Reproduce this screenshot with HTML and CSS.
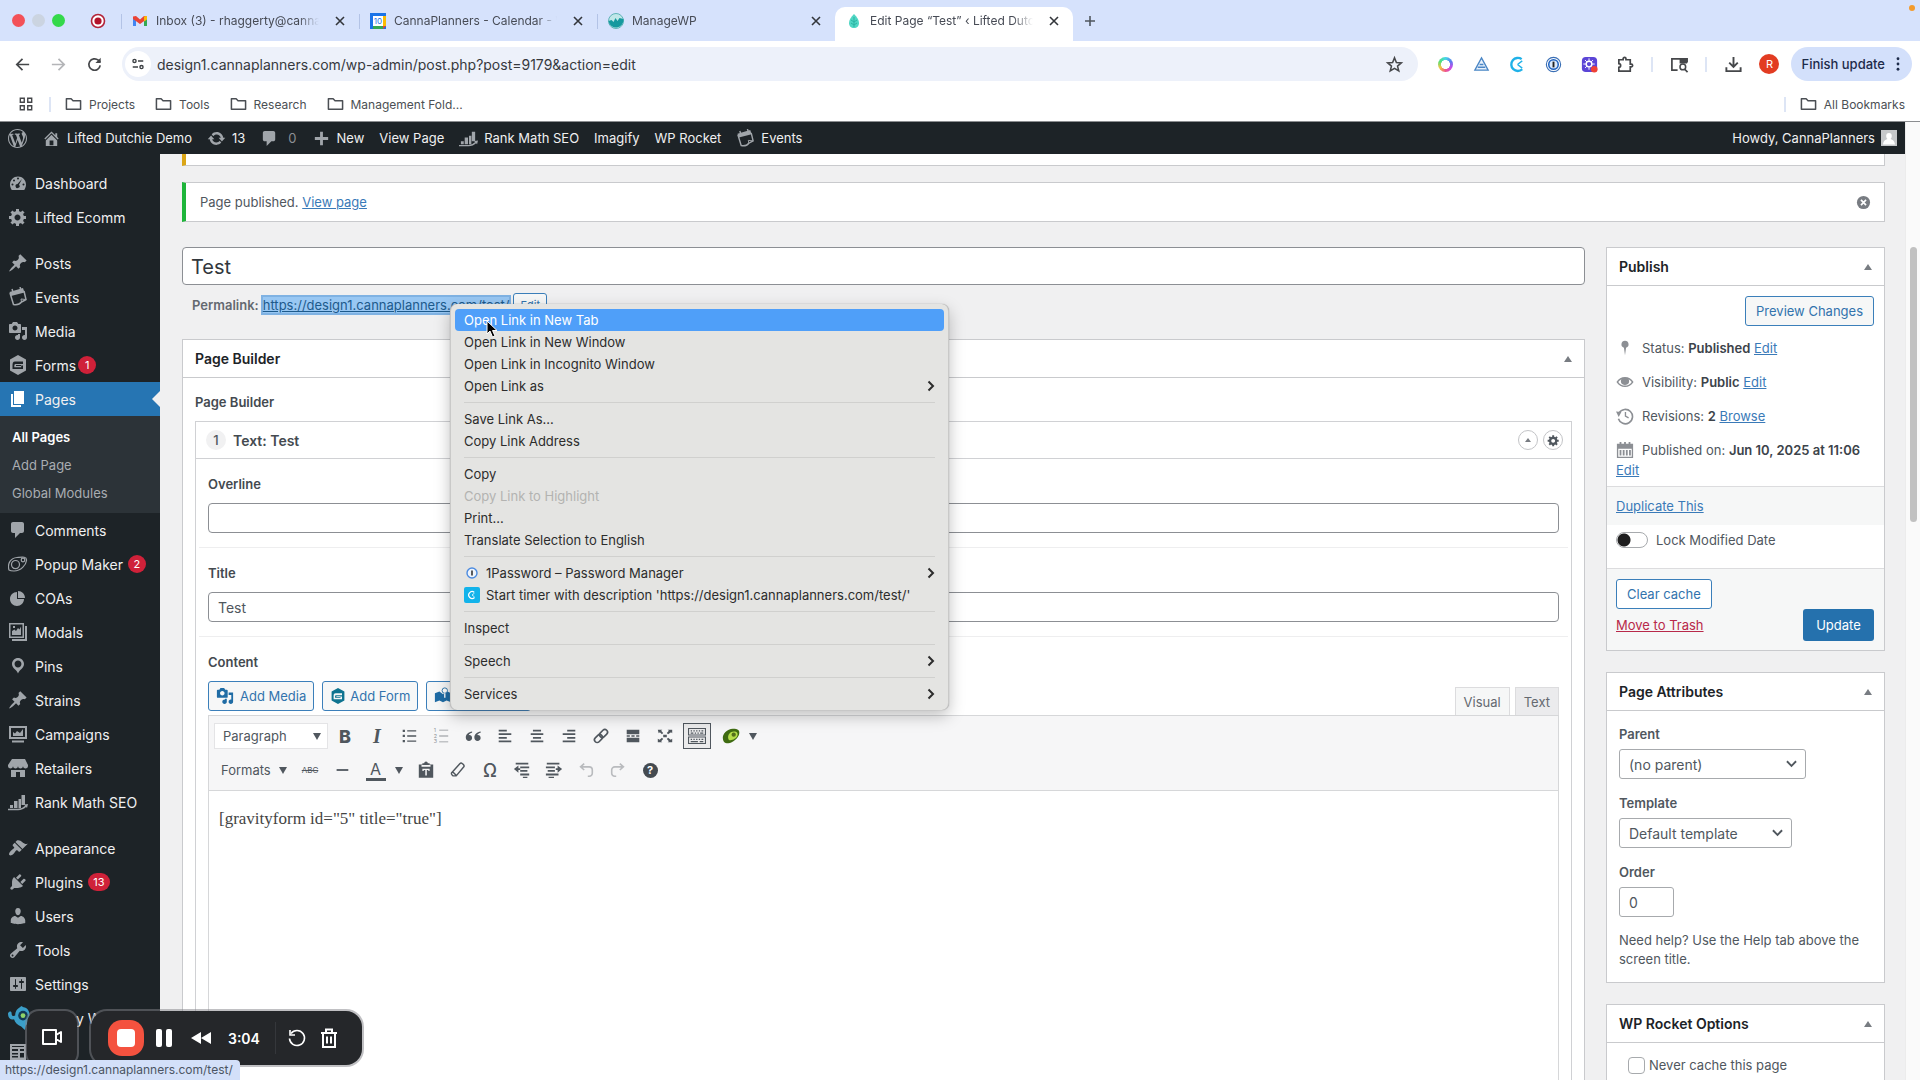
FILE: index.html
```html
<!DOCTYPE html>
<html lang="en">
<head>
  <meta charset="UTF-8" />
  <meta name="viewport" content="width=device-width, initial-scale=1.0"/>
  <title>Edit Page "Test"</title>
  <link rel="stylesheet" href="styles.css">
</head>
<body>
  <!-- icon sprite -->
  <svg class="sprite" aria-hidden="true">
    <symbol id="i-close" viewBox="0 0 16 16"><path d="M4 4l8 8M12 4l-8 8" fill="none" stroke="currentColor" stroke-width="1.6"/></symbol>
    <symbol id="i-folder" viewBox="0 0 18 16"><path d="M1.500 2.500h5l2 2h8v9h-15z" fill="none" stroke="currentColor" stroke-width="1.600" stroke-linejoin="round"/></symbol>
    <symbol id="i-chevron" viewBox="0 0 10 12"><path d="M2.500 1.500L7 6l-4.500 4.500" fill="none" stroke="currentColor" stroke-width="2"/></symbol>
    <symbol id="i-wp" viewBox="0 0 20 20"><path d="M20 10c0-5.510-4.490-10-10-10C4.480 0 0 4.490 0 10c0 5.520 4.480 10 10 10 5.510 0 10-4.480 10-10zM7.780 15.370L4.370 6.220c.55-.02 1.170-.08 1.170-.08.5-.06.44-1.130-.06-1.110 0 0-1.450.11-2.370.11-.18 0-.37 0-.58-.01C4.120 2.690 6.870 1.110 10 1.110c2.330 0 4.450.87 6.050 2.340-.68-.11-1.650.39-1.650 1.580 0 .74.45 1.360.9 2.100.35.61.55 1.360.55 2.460 0 1.490-1.400 5-1.400 5l-3.030-8.370c.54-.02.82-.17.82-.17.5-.05.44-1.250-.06-1.220 0 0-1.440.12-2.380.12-.87 0-2.330-.12-2.330-.12-.5-.03-.56 1.200-.06 1.220l.92.08 1.260 3.410zM17.410 10c.24-.64.74-1.870.43-4.250.7 1.290 1.050 2.710 1.050 4.250 0 3.290-1.730 6.240-4.400 7.780.97-2.590 1.940-5.200 2.920-7.780zM6.100 18.090C3.120 16.650 1.110 13.530 1.110 10c0-1.300.23-2.480.72-3.590C3.250 10.300 4.670 14.200 6.100 18.090zm4.030-6.630l2.580 6.980c-.86.29-1.760.45-2.710.45-.79 0-1.570-.11-2.290-.33.81-2.380 1.620-4.740 2.420-7.100z"/></symbol>
    <symbol id="i-home" viewBox="0 0 20 20"><path d="M16 8.500l1.530 1.530-1.060 1.060L10 4.600l-6.470 6.490-1.060-1.060L10 2.500l4 4v-2h2v4zm-6-2.460l6 5.990V18H4v-5.970zM12 17v-5H8v5h4z"/></symbol>
    <symbol id="i-update" viewBox="0 0 20 20"><path d="M10.200 3.280c3.530 0 6.430 2.610 6.920 6h2.080l-3.500 4-3.500-4h2.320c-.45-1.970-2.210-3.450-4.320-3.450-1.450 0-2.730.71-3.540 1.780L4.950 5.660C6.230 4.200 8.110 3.280 10.200 3.280zm-.4 13.440c-3.520 0-6.430-2.610-6.920-6H.8l3.500-4c1.170 1.330 2.330 2.670 3.500 4H5.480c.45 1.970 2.210 3.450 4.320 3.450 1.450 0 2.730-.71 3.540-1.780l1.710 1.950c-1.280 1.460-3.150 2.380-5.250 2.380z"/></symbol>
    <symbol id="i-comment" viewBox="0 0 20 20"><path d="M5 2h9c1.100 0 2 .9 2 2v7c0 1.100-.9 2-2 2h-2l-5 5v-5H5c-1.100 0-2-.9-2-2V4c0-1.100.9-2 2-2z"/></symbol>
    <symbol id="i-plus" viewBox="0 0 20 20"><path d="M17 8.500v3h-5.500V17h-3v-5.500H3v-3h5.500V3h3v5.500z"/></symbol>
    <symbol id="i-rank" viewBox="0 0 20 20"><path d="M2 13h3v3H2zM6 9h3.500v7H6zM10.500 7H13v9h-2.500zM13.500 3H17v10h-3.500z"/><path d="M0 17.500h10c4 0 5.500-1 8-3.500" fill="none" stroke="currentColor" stroke-width="1.500"/><path d="M16 12.500l4-.5-1 4z"/></symbol>
    <symbol id="i-events" viewBox="0 0 20 20"><path d="M1.500 5L15 1l1.500 4.500L3 9z"/><path d="M2 6l3.500 11.500c3 .5 6.500-.5 8-2.500l4.500-2.500L16 4" fill="none" stroke="currentColor" stroke-width="1.500"/><path d="M13.500 15l-.5-3 5 .5" fill="none" stroke="currentColor"/><path d="M4 2l1 3M12 0l1 3" stroke="currentColor" stroke-width="1.500"/></symbol>
    <symbol id="i-dash" viewBox="0 0 20 20"><path fill-rule="evenodd" d="M3.760 17C2.660 15.400 2 13.400 2 11.500 2 7 5.600 3.500 10 3.500s8 3.500 8 8c0 1.900-.66 3.900-1.760 5.500zM9 5.500a1 1 0 1 0 2 0 1 1 0 1 0-2 0M5 7.500a1 1 0 1 0 2 0 1 1 0 1 0-2 0M3.500 11.500a1 1 0 1 0 2 0 1 1 0 1 0-2 0M14.500 11.500a1 1 0 1 0 2 0 1 1 0 1 0-2 0M14 6l-3 5.700a2 2 0 1 1-1.500-.6z"/></symbol>
    <symbol id="i-gear" viewBox="0 0 20 20"><path d="M18 12h-2.180c-.17.7-.44 1.350-.81 1.930l1.540 1.540-2.100 2.100-1.540-1.540c-.58.36-1.230.63-1.910.79V19H8v-2.180c-.68-.16-1.330-.43-1.910-.79l-1.540 1.540-2.120-2.120 1.540-1.540c-.36-.58-.63-1.230-.79-1.910H1V9.030h2.170c.16-.7.44-1.350.8-1.940L2.430 5.550l2.100-2.100 1.540 1.540c.58-.37 1.240-.64 1.930-.81V2h3v2.180c.68.16 1.330.43 1.910.79l1.540-1.540 2.120 2.120-1.540 1.540c.36.59.64 1.240.8 1.940H18V12zm-8.500 1.500c1.660 0 3-1.340 3-3s-1.340-3-3-3-3 1.340-3 3 1.340 3 3 3z"/></symbol>
    <symbol id="i-pin" viewBox="0 0 20 20"><path d="M10.440 3.020l1.820-1.820 6.360 6.350-1.830 1.820c-1.050-.68-2.480-.57-3.410.36l-.75.75c-.92.93-1.040 2.350-.35 3.410l-1.830 1.820-2.410-2.410-2.800 2.790c-.42.42-3.380 2.710-3.800 2.290s1.860-3.390 2.280-3.810l2.790-2.790L4.100 9.360l1.830-1.820c1.050.69 2.480.57 3.400-.36l.75-.75c.93-.92 1.050-2.350.36-3.410z"/></symbol>
    <symbol id="i-media" viewBox="0 0 20 20"><path d="M13 11V4c0-.55-.45-1-1-1h-1.670L9 1H5L3.670 3H2c-.55 0-1 .45-1 1v7c0 .55.45 1 1 1h10c.55 0 1-.45 1-1zM7 4.500c1.380 0 2.500 1.120 2.500 2.500S8.380 9.500 7 9.500 4.500 8.380 4.500 7 5.620 4.500 7 4.500zM14 6h5v10.500c0 1.380-1.120 2.500-2.500 2.500S14 17.880 14 16.500s1.120-2.500 2.500-2.500c.17 0 .34.02.5.05V9h-3V6zm-4 8.050V13h2v3.500c0 1.380-1.120 2.500-2.500 2.500S7 17.880 7 16.500 8.120 14 9.500 14c.17 0 .34.02.5.05z"/></symbol>
    <symbol id="i-form" viewBox="0 0 20 20"><path fill-rule="evenodd" d="M10 0l8 4.500v11L10 20l-8-4.500v-11zM7 6.500c-2 0-2.500 1.500-2.500 4V14H15v-3.500h-1.800v1.700H6.300c0-2.500.2-3.200 1.200-3.200H15V6.500zM8 10h5v1H8z"/></symbol>
    <symbol id="i-page" viewBox="0 0 20 20"><path d="M6 15V2h10v13H6zm-1 1h8v2H3V5h2v11z"/></symbol>
    <symbol id="i-popup" viewBox="0 0 20 20"><g fill="none" stroke="currentColor" stroke-width="1.200"><path d="M1 16C-1 9 3 4 9 3.500c5-.5 10-1.500 9.500 3S13 17 6 17c-2 0-4-.3-5-1z"/><circle cx="7.500" cy="10.500" r="4"/><circle cx="15" cy="6" r="1.800"/></g><path d="M3.500 12.500c1 3 5 3.500 7 1.500-2 .5-5 .5-7-1.500z"/></symbol>
    <symbol id="i-pie" viewBox="0 0 20 20"><path d="M10 10V3c3.870 0 7 3.130 7 7h-7zM9 4v7h7c0 3.870-3.130 7-7 7s-7-3.130-7-7 3.130-7 7-7z"/></symbol>
    <symbol id="i-modal" viewBox="0 0 20 20"><path fill-rule="evenodd" d="M1 1h15v15H1zM2.500 2.500v12h12v-12zM17 4h2v15H4v-2h13z"/><path d="M4 13V9l2.500-1.500L8 9l2-3 1.500 1.500L13 4.500V13zM5 4h2v2H5z"/></symbol>
    <symbol id="i-location" viewBox="0 0 20 20"><path d="M10 2C6.690 2 4 4.690 4 8c0 2.020 1.170 3.710 2.530 4.890.43.37 1.180.96 1.850 1.830.74.97 1.410 2.010 1.620 2.710.21-.7.88-1.740 1.620-2.710.67-.87 1.420-1.460 1.850-1.830C14.830 11.710 16 10.020 16 8c0-3.310-2.690-6-6-6zm0 2.560c1.900 0 3.440 1.540 3.440 3.440S11.900 11.440 10 11.440 6.560 9.900 6.560 8 8.100 4.560 10 4.560z"/></symbol>
    <symbol id="i-campaign" viewBox="0 0 20 20"><path fill-rule="evenodd" d="M1 2h18v13H1zM3 4v9h14V4zM4 16.500h12v2H4z"/><path d="M5 12V8l2 1.500L9 7l3 2 3-4v7z"/></symbol>
    <symbol id="i-store" viewBox="0 0 20 20"><path d="M1 10c.41.29.96.43 1.500.43.55 0 1.090-.14 1.500-.43.62-.46 1-1.170 1-2 0 .83.37 1.540 1 2 .41.29.96.43 1.500.43.55 0 1.090-.14 1.500-.43.62-.46 1-1.170 1-2 0 .83.37 1.540 1 2 .41.29.96.43 1.510.43.54 0 1.080-.14 1.490-.43.62-.46 1-1.170 1-2 0 .83.37 1.540 1 2 .41.29.96.43 1.500.43.55 0 1.090-.14 1.500-.43.63-.46 1-1.170 1-2V7l-3-6H4L0 7v1c0 .83.37 1.540 1 2zm2 9h5v-5h4v5h5v-7H3z"/></symbol>
    <symbol id="i-brush" viewBox="0 0 20 20"><path d="M14.480 11.060L7.410 3.990l1.500-1.500c.5-.56 2.300-.47 3.510.32 1.210.8 1.430 1.280 2.910 2.100 1.180.64 2.450 1.260 4.450.85zm-.71.71L6.700 4.700 4.930 6.470c-.39.39-.39 1.020 0 1.410l1.060 1.060c.39.39.39 1.030 0 1.420-.6.6-1.430 1.110-2.210 1.690-.35.26-.7.53-1.010.84C1.430 14.230.4 16.080 1.400 17.070c.99 1 2.840-.03 4.180-1.360.31-.31.58-.66.85-1.020.57-.78 1.080-1.610 1.690-2.210.39-.39 1.020-.39 1.410 0l1.060 1.060c.39.39 1.020.39 1.410 0z"/></symbol>
    <symbol id="i-plugin" viewBox="0 0 20 20"><path d="M13.110 4.360L9.870 7.600 8 5.730l3.240-3.240c.35-.34 1.050-.2 1.560.32.52.51.66 1.210.31 1.550zm-8 1.770l.91-1.120 9.010 9.010-1.190.84c-.71.71-2.630 1.160-3.820 1.160H6.140L4.900 17.260c-.59.59-1.540.59-2.120 0-.59-.58-.59-1.530 0-2.120l1.240-1.240v-3.880c0-1.130.4-3.190 1.090-3.890zm7.260 3.970l3.240-3.240c.34-.35 1.040-.21 1.550.31.52.51.66 1.210.31 1.550l-3.240 3.250z"/></symbol>
    <symbol id="i-user" viewBox="0 0 20 20"><path d="M10 9.250c-2.270 0-2.730-3.440-2.730-3.440C7 4.020 7.820 2 9.970 2c2.160 0 2.980 2.020 2.710 3.810 0 0-.41 3.440-2.680 3.440zm0 2.570L12.720 10c2.390 0 4.520 2.330 4.520 4.530v2.490s-3.650 1.130-7.240 1.130c-3.650 0-7.240-1.130-7.240-1.130v-2.490c0-2.250 1.940-4.480 4.470-4.480z"/></symbol>
    <symbol id="i-tools" viewBox="0 0 20 20"><path d="M16.680 9.770c-1.340 1.340-3.300 1.670-4.950.99l-5.410 6.520c-.99.99-2.590.99-3.580 0s-.99-2.590 0-3.570l6.520-5.420c-.68-1.650-.35-3.610.99-4.950 1.280-1.280 3.120-1.620 4.720-1.060l-2.890 2.890 2.820 2.820 2.860-2.870c.53 1.580.18 3.390-1.080 4.650zM3.810 16.210c.4.39 1.040.39 1.430 0 .4-.4.4-1.040 0-1.430-.39-.4-1.030-.4-1.430 0-.39.39-.39 1.030 0 1.430z"/></symbol>
    <symbol id="i-settings" viewBox="0 0 20 20"><path d="M18 16V4c0-.55-.45-1-1-1H3c-.55 0-1 .45-1 1v12c0 .55.45 1 1 1h14c.55 0 1-.45 1-1zM8 11h1c.55 0 1 .45 1 1s-.45 1-1 1H8v1.500c0 .28-.22.5-.5.5s-.5-.22-.5-.5V13H6c-.55 0-1-.45-1-1s.45-1 1-1h1V5.500c0-.28.22-.5.5-.5s.5.22.5.5V11zm5-2h-1c-.55 0-1-.45-1-1s.45-1 1-1h1V5.500c0-.28.22-.5.5-.5s.5.22.5.5V7h1c.55 0 1 .45 1 1s-.45 1-1 1h-1v5.500c0 .28-.22.5-.5.5s-.5-.22-.5-.5V9z"/></symbol>
    <symbol id="i-table" viewBox="0 0 20 20"><path fill-rule="evenodd" d="M2 2h16v17H2zM4 7v2h6V7zM12 7v2h4V7zM4 11v1.500h6V11zM4 14v1.500h6V14zM12 11v4.500h4V11zM4 4v1h12V4z"/></symbol>
    <symbol id="i-ul" viewBox="0 0 20 20"><path d="M3 3h2.500v2.500H3zM3 8.700h2.500v2.500H3zM3 14.500h2.500V17H3zM8 3.500h10V5H8zM8 9.200h10v1.500H8zM8 15h10v1.500H8z"/></symbol>
    <symbol id="i-quote" viewBox="0 0 20 20"><path d="M9 5C5 5.500 2 8 2 11.700 2 14 3.500 15.500 5.500 15.500S9 14 9 12.200 7.700 9 6 9c-.3 0-.6 0-.8.1C5.700 7.700 7 6.800 9 6.400zM18.500 5c-4 .5-7 3-7 6.700 0 2.300 1.500 3.800 3.500 3.800s3.500-1.500 3.500-3.300S17.200 9 15.500 9c-.3 0-.6 0-.8.1.5-1.400 1.800-2.300 3.800-2.700z"/></symbol>
    <symbol id="i-left" viewBox="0 0 20 20"><path d="M3 3h9v2H3zM3 7h14v2H3zM3 11h9v2H3zM3 15h14v2H3z"/></symbol>
    <symbol id="i-center" viewBox="0 0 20 20"><path d="M5.500 3h9v2h-9zM3 7h14v2H3zM5.500 11h9v2h-9zM3 15h14v2H3z"/></symbol>
    <symbol id="i-right" viewBox="0 0 20 20"><path d="M8 3h9v2H8zM3 7h14v2H3zM8 11h9v2H8zM3 15h14v2H3z"/></symbol>
    <symbol id="i-link" viewBox="0 0 20 20"><g fill="none" stroke="currentColor" stroke-width="1.800" transform="rotate(-45 10 10)"><rect x="1" y="7" width="10" height="6" rx="3"/><rect x="9" y="7" width="10" height="6" rx="3"/></g></symbol>
    <symbol id="i-more" viewBox="0 0 20 20"><path d="M3 3h14v5H3zM3 9.200h3.500v1.600H3zM8.200 9.200h3.600v1.600H8.200zM13.500 9.200H17v1.600h-3.500zM3 12h14v5H3z"/></symbol>
    <symbol id="i-full" viewBox="0 0 20 20"><path d="M2 3h5L5.700 4.300 8 6.600 6.600 8 4.300 5.700 3 7zM18 3v4l-1.300-1.300L13.400 8 12 6.600l2.300-2.300L13 3zM2 17v-4l2 1.300L6.600 12 8 13.400l-2.300 2.300L7 17zM18 17h-5l1.300-1.300L12 13.400l1.400-1.400 3 2.300L18 13zM8 8.500h4v3H8z"/></symbol>
    <symbol id="i-keys" viewBox="0 0 20 20"><path fill-rule="evenodd" d="M0 1h20v8.500H0zM1.200 2.200v6.100h17.600V2.200zM0 10.500h20V19H0zM1.200 11.700v6.100h17.600v-6.100z"/><path d="M3 3.500h1.500V5H3zM6 3.500h1.500V5H6zM9 3.500h1.500V5H9zM12 3.500h1.500V5H12zM15 3.500h2V5h-2zM3 6h3v1.500H3zM7.500 6H9v1.500H7.500zM10.500 6H12v1.500h-1.500zM13.500 6H17v1.500h-3.500zM3 13h1.500v1.500H3zM6 13h1.500v1.500H6zM9 13h1.500v1.500H9zM12 13h1.500v1.500H12zM15 13h2v1.500h-2zM3 15.500h8V17H3zM13 15.500h4V17h-4z"/></symbol>
    <symbol id="i-paste" viewBox="0 0 20 20"><path fill-rule="evenodd" d="M2 4h4V2.500h2a2 2 0 0 1 4 0h2V4h4v14.500H2zM5 4.500v1.800h10V4.500zM6 8.500v2.500h1.500v-1h1.700v6h1.700v-6h1.700v1H14V8.500z"/></symbol>
    <symbol id="i-eraser" viewBox="0 0 20 20"><path d="M3 13l9-10c1-1 2-.8 3 0l1 1c1 1 1 2 0 3L8 16.500H4.500c-1.500-1-2.200-2.500-1.500-3.500zM4 12l4.500 4.500" fill="none" stroke="currentColor" stroke-width="1.600"/></symbol>
    <symbol id="i-outdent" viewBox="0 0 20 20"><path d="M3 2h14v2H3zM8 6h10v2H8zM8 10h8v2H8zM8 14h10v2H8zM11 17.500h5V19h-5zM6 5v3h2v2H6v3L1 9z"/></symbol>
    <symbol id="i-indent" viewBox="0 0 20 20"><path d="M2 2h14v2H2zM1 6h10v2H1zM3 10h8v2H3zM1 14h14v2H1zM4 17.500h6V19H4zM14 5v3h-2v2h2v3l5-4z"/></symbol>
    <symbol id="i-undo" viewBox="0 0 20 20"><path d="M12 17h1.500A3.500 3.500 0 0 0 17 13V10a3.500 3.500 0 0 0-3.500-3.500H5M8 3L4 6.500 8 10" fill="none" stroke="currentColor" stroke-width="1.800"/></symbol>
    <symbol id="i-redo" viewBox="0 0 20 20"><path d="M8 17H6.500A3.500 3.500 0 0 1 3 13V10a3.500 3.500 0 0 1 3.500-3.500H15M12 3l4 3.500-4 3.500" fill="none" stroke="currentColor" stroke-width="1.800"/></symbol>
    <symbol id="i-status" viewBox="0 0 20 20"><path d="M10 2a4 4 0 0 1 1.200 7.800L10 18 8.800 9.800A4 4 0 0 1 10 2z"/></symbol>
    <symbol id="i-eye" viewBox="0 0 20 20"><path fill-rule="evenodd" d="M.5 10C3 6 6 4.500 10 4.500S17 6 19.500 10C17 14 14 15.500 10 15.500S3 14 .5 10zM2.500 10c2 2.800 4.500 4 7.500 4s5.500-1.200 7.500-4c-1-1.300-2-2.300-3.500-3 .6 1 .8 2 .5 3.200-1 4-8 4-9 0C5.200 9 5.400 8 6 7c-1.500.7-2.500 1.700-3.500 3z"/></symbol>
    <symbol id="i-history" viewBox="0 0 20 20"><path d="M3.500 6.500a8 8 0 1 1-.8 6.500" fill="none" stroke="currentColor" stroke-width="1.800"/><path d="M0 5l6 .5L3 11z"/><path d="M10.500 5.500V10l3.500 2" fill="none" stroke="currentColor" stroke-width="1.500"/></symbol>
    <symbol id="i-calendar" viewBox="0 0 20 20"><path fill-rule="evenodd" d="M1 3h3V1h2v2h3V1h2v2h3V1h2v2h3v16H1zM2.500 8.500v9h15v-9z"/><path d="M4 10h2v6H4zM7.500 10h2v6h-2zM11 10h2v6h-2zM14.500 10h2v6h-2z"/></symbol>
    <symbol id="i-clock" viewBox="0 0 16 16"><path d="M11.500 3.500A5.500 5.500 0 1 0 12 12" fill="none" stroke="currentColor" stroke-width="2"/><path d="M8 8l4-3M8 8l4 3" stroke="currentColor" stroke-width="1.200"/></symbol>
  </svg>

  <div class="tabstrip">
    <span class="light light-red"></span>
    <span class="light light-gray"></span>
    <span class="light light-green"></span>
    <svg class="rec-dot" viewBox="0 0 16 16"><circle cx="8" cy="8" r="6.500" fill="#fff" stroke="#b3243a" stroke-width="1.600"/><circle cx="8" cy="8" r="3.600" fill="#b3122a"/></svg>
    <div class="tab">
      <svg class="favicon" viewBox="0 0 16 16"><path d="M1 4v9h3V6z" fill="#4285f4"/><path d="M15 4v9h-3V6z" fill="#34a853"/><path d="M1 3.500L4 3l4 3.500L12 3l3 .5V6l-7 5-7-5z" fill="#ea4335"/><path d="M12 3.500l3-.5v3.500l-3 2z" fill="#fbbc04"/></svg>
      <span class="tab-title">Inbox (3) - rhaggerty@canna</span>
      <button class="tab-close" aria-label="Close tab"><svg><use href="#i-close"/></svg></button>
    </div>
    <div class="tab">
      <svg class="favicon" viewBox="0 0 16 16"><path d="M0 0h16v16H0z" fill="#1a73e8"/><path d="M13 3h3v10h-3z" fill="#fbbc04"/><path d="M3 13h10v3H3z" fill="#34a853"/><path d="M13 13h3l-3 3z" fill="#ea4335"/><path d="M3 3h10v10H3z" fill="#fff"/><text x="8" y="11" text-anchor="middle" class="cal-day">10</text></svg>
      <span class="tab-title">CannaPlanners - Calendar - W</span>
      <button class="tab-close" aria-label="Close tab"><svg><use href="#i-close"/></svg></button>
    </div>
    <div class="tab">
      <svg class="favicon" viewBox="0 0 16 16"><circle cx="8" cy="8" r="7.500" fill="#bfe7e8" stroke="#5fb4b8"/><path d="M.5 8l3-1 2 2 2-4 2 3 2-3 4 1A7.500 7.500 0 1 1 .5 8z" fill="#16999f"/></svg>
      <span class="tab-title">ManageWP</span>
      <button class="tab-close" aria-label="Close tab"><svg><use href="#i-close"/></svg></button>
    </div>
    <div class="tab tab-active">
      <svg class="favicon" viewBox="0 0 16 16"><path d="M8 1c3 3 5 6 5 9 0 3-2 5-5 5s-5-2-5-5c0-3 2-6 5-9z" fill="#4fd6c4"/><path d="M8 4v10M8 9l3-2M8 9L5 7M8 12l3-2M8 12l-3-2" stroke="#2bb3a3" fill="none"/></svg>
      <span class="tab-title">Edit Page “Test” ‹ Lifted Dutc</span>
      <button class="tab-close" aria-label="Close tab"><svg><use href="#i-close"/></svg></button>
    </div>
    <button class="new-tab" aria-label="New tab"><svg viewBox="0 0 16 16"><path d="M8 3v10M3 8h10" stroke="currentColor" stroke-width="1.600"/></svg></button>
    <span class="mic-dot"></span>
  </div>

  <div class="toolbar">
    <button class="tool" aria-label="Back"><svg viewBox="0 0 20 20"><path d="M17 10H4M10 4l-6 6 6 6" fill="none" stroke="#45474a" stroke-width="1.800"/></svg></button>
    <button class="tool" aria-label="Forward"><svg viewBox="0 0 20 20"><path d="M3 10h13M10 4l6 6-6 6" fill="none" stroke="#b4b5b8" stroke-width="1.800"/></svg></button>
    <button class="tool" aria-label="Reload"><svg viewBox="0 0 20 20"><path d="M16 11a6 6 0 1 1-2-5.500L16 7.500" fill="none" stroke="#45474a" stroke-width="1.800"/><path d="M16.500 3v5.500H11z" fill="#45474a"/></svg></button>
    <div class="omnibox">
      <span class="site-info"><svg viewBox="0 0 16 16"><g fill="none" stroke="#3c4043" stroke-width="1.600"><circle cx="4" cy="4.500" r="1.800"/><path d="M8 4.500h6M2 11.500h6"/><circle cx="12" cy="11.500" r="1.800"/></g></svg></span>
      <input class="url" type="text" aria-label="Address" value="design1.cannaplanners.com/wp-admin/post.php?post=9179&amp;action=edit">
      <button class="tool" aria-label="Bookmark this tab"><svg viewBox="0 0 20 20"><path d="M10 3l2 5 5.200.3-4 3.400 1.300 5.100L10 14l-4.500 2.800 1.300-5.100-4-3.400L8 8z" fill="none" stroke="#45474a" stroke-width="1.600"/></svg></button>
    </div>
    <div class="extensions">
      <button class="tool" aria-label="Colour picker"><span class="ring"></span></button>
      <button class="tool" aria-label="Accessibility"><svg viewBox="0 0 20 20"><path d="M10 3l7 13H3z" fill="#e8f1fb" stroke="#4a86c5" stroke-width="1.400"/><path d="M6 13h8M8 10h4" stroke="#4a86c5" stroke-width="1.600"/></svg></button>
      <button class="tool tool-cyan" aria-label="Timer"><svg viewBox="0 0 16 16"><use href="#i-clock"/></svg></button>
      <button class="tool" aria-label="1Password"><svg viewBox="0 0 20 20"><circle cx="10" cy="10" r="7.500" fill="#fff" stroke="#3a6fb5" stroke-width="1.200"/><circle cx="10" cy="10" r="5" fill="#dbe9fb" stroke="#1f62c0" stroke-width="1.600"/><path d="M9 7h2v6H9z" fill="#222"/></svg></button>
      <button class="tool" aria-label="Recorder"><svg viewBox="0 0 20 20"><rect x="2" y="2" width="16" height="16" rx="4" fill="#5b45d6"/><circle cx="9.500" cy="9.500" r="3" fill="none" stroke="#fff" stroke-width="1.500"/><path d="M9.500 3.500v3M9.500 12.500v3M3.500 9.500h3M12.500 9.500h3M5.300 5.300l2 2M13.700 5.300l-2 2M5.300 13.700l2-2" stroke="#fff"/><circle cx="15" cy="15" r="3.500" fill="#ef4136"/></svg></button>
      <button class="tool" aria-label="Extensions"><svg viewBox="0 0 20 20"><path d="M3 5h4.500V4a1.500 1.500 0 0 1 3 0v1H15v4.500h1a1.500 1.500 0 0 1 0 3h-1V17H3v-4c2.500 0 2.500-4 0-4z" fill="none" stroke="#45474a" stroke-width="1.800"/></svg></button>
      <span class="vsep"></span>
      <button class="tool" aria-label="Search tabs"><svg viewBox="0 0 20 20"><path d="M8 16H2V4h16v4M11 4v4h7" fill="none" stroke="#45474a" stroke-width="1.800"/><path d="M11 4h7v4h-7z" fill="#45474a"/><circle cx="13.500" cy="12.500" r="3" fill="none" stroke="#45474a" stroke-width="1.600"/><path d="M15.500 15l3 3" stroke="#45474a" stroke-width="1.800"/></svg></button>
      <span class="vsep"></span>
      <button class="tool" aria-label="Downloads"><svg viewBox="0 0 20 20"><path d="M10 2v10M5.500 8l4.500 4.500L14.500 8M2.500 13v4h15v-4" fill="none" stroke="#45474a" stroke-width="2"/></svg></button>
      <button class="tool" aria-label="Profile"><span class="profile">R</span></button>
    </div>
    <button class="finish">Finish update <svg viewBox="0 0 4 16"><circle cx="2" cy="2" r="1.600"/><circle cx="2" cy="8" r="1.600"/><circle cx="2" cy="14" r="1.600"/></svg></button>
  </div>

  <nav class="bookmarks">
    <svg class="apps" viewBox="0 0 16 16"><path d="M1.500 1.500h4.500v4.500H1.500zM10 1.500h4.500v4.500H10zM1.500 10h4.500v4.500H1.500zM10 10h4.500v4.500H10z" fill="none" stroke="#45474a" stroke-width="1.600"/></svg>
    <span class="vsep"></span>
    <a href="#"><svg><use href="#i-folder"/></svg>Projects</a>
    <a href="#"><svg><use href="#i-folder"/></svg>Tools</a>
    <a href="#"><svg><use href="#i-folder"/></svg>Research</a>
    <a href="#"><svg><use href="#i-folder"/></svg>Management Fold...</a>
    <span class="vsep push"></span>
    <a href="#"><svg><use href="#i-folder"/></svg>All Bookmarks</a>
  </nav>

  <div class="viewport">
    <div class="wp">
      <header class="adminbar">
        <a href="#" aria-label="WordPress"><svg><use href="#i-wp"/></svg></a>
        <a href="#"><svg><use href="#i-home"/></svg>Lifted Dutchie Demo</a>
        <a href="#"><svg><use href="#i-update"/></svg>13</a>
        <a href="#" class="dim"><svg><use href="#i-comment"/></svg>0</a>
        <a href="#"><svg><use href="#i-plus"/></svg>New</a>
        <a href="#">View Page</a>
        <a href="#"><svg><use href="#i-rank"/></svg>Rank Math SEO</a>
        <a href="#">Imagify</a>
        <a href="#">WP Rocket</a>
        <a href="#"><svg><use href="#i-events"/></svg>Events</a>
        <a href="#" class="howdy">Howdy, CannaPlanners <svg class="avatar" viewBox="0 0 16 16"><path d="M0 0h16v16H0z" fill="#c6c8ca"/><path d="M8 3c4 0 3 5 1.500 6 2 .8 4 1.500 4.500 5.500H2C2.500 10.500 4.500 9.800 6.500 9 5 8 4 3 8 3z" fill="#fff"/></svg></a>
      </header>

      <div class="wp-body">
        <nav class="menu">
          <a href="#"><svg><use href="#i-dash"/></svg>Dashboard</a>
          <a href="#"><svg><use href="#i-gear"/></svg>Lifted Ecomm</a>
          <a href="#" class="gap"><svg><use href="#i-pin"/></svg>Posts</a>
          <a href="#"><svg><use href="#i-events"/></svg>Events</a>
          <a href="#"><svg><use href="#i-media"/></svg>Media</a>
          <a href="#"><svg><use href="#i-form"/></svg>Forms <span class="count tight">1</span></a>
          <a href="#" class="current"><svg><use href="#i-page"/></svg>Pages</a>
          <div class="submenu">
            <a href="#" class="on">All Pages</a>
            <a href="#">Add Page</a>
            <a href="#">Global Modules</a>
          </div>
          <a href="#"><svg><use href="#i-comment"/></svg>Comments</a>
          <a href="#"><svg><use href="#i-popup"/></svg>Popup Maker <span class="count">2</span></a>
          <a href="#"><svg><use href="#i-pie"/></svg>COAs</a>
          <a href="#"><svg><use href="#i-modal"/></svg>Modals</a>
          <a href="#"><svg><use href="#i-location"/></svg>Pins</a>
          <a href="#"><svg><use href="#i-pin"/></svg>Strains</a>
          <a href="#"><svg><use href="#i-campaign"/></svg>Campaigns</a>
          <a href="#"><svg><use href="#i-store"/></svg>Retailers</a>
          <a href="#"><svg><use href="#i-rank"/></svg>Rank Math SEO</a>
          <a href="#" class="gap"><svg><use href="#i-brush"/></svg>Appearance</a>
          <a href="#"><svg><use href="#i-plugin"/></svg>Plugins <span class="count">13</span></a>
          <a href="#"><svg><use href="#i-user"/></svg>Users</a>
          <a href="#"><svg><use href="#i-tools"/></svg>Tools</a>
          <a href="#"><svg><use href="#i-settings"/></svg>Settings</a>
          <a href="#"><svg class="bird" viewBox="0 0 20 20"><path d="M0 6c1-2 3-2 3 0s1 3 3 2c0-4 2-6 4-7l1-1 2 1c3 0 5 3 5 7s-1 6-3 8l-1 4-3-3c-3-1-5-3-6-6-3 1-5-1-5-5z" fill="#3b9fc9"/><circle cx="12.500" cy="8" r="4" fill="#123a55"/><circle cx="12.500" cy="8" r="2" fill="#8fd46a"/></svg>Johnny W</a>
          <a href="#" aria-label="Table"><svg><use href="#i-table"/></svg></a>
        </nav>

        <main class="content">
          <div class="notice notice-warning"></div>
          <div class="notice notice-success">
            <p>Page published. <a href="#">View page</a></p>
            <button class="dismiss" aria-label="Dismiss"><svg viewBox="0 0 16 16"><circle cx="8" cy="8" r="7" fill="#787c82"/><path d="M5.300 5.300l5.400 5.400M10.700 5.300l-5.400 5.400" stroke="#fff" stroke-width="1.800"/></svg></button>
          </div>

          <div class="columns">
            <div class="main-col">
              <input class="title-input" type="text" aria-label="Page title" value="Test">
              <div class="permalink"><strong>Permalink:</strong> <a href="#">https://design1.cannaplanners.com/test/</a> <button class="btn btn-small">Edit</button></div>

              <section class="postbox builder">
                <div class="postbox-head"><h2>Page Builder</h2><span class="up"></span></div>
                <div class="builder-body">
                  <h3>Page Builder</h3>
                  <div class="module">
                    <div class="module-head">
                      <span class="order">1</span><strong>Text: Test</strong>
                      <button class="round" aria-label="Collapse"><span class="up small"></span></button>
                      <button class="round" aria-label="Options"><svg><use href="#i-gear"/></svg></button>
                    </div>
                    <div class="field">
                      <label for="overline">Overline</label>
                      <input type="text" id="overline">
                    </div>
                    <div class="field">
                      <label for="title">Title</label>
                      <input type="text" id="title" value="Test">
                    </div>
                    <div class="field">
                      <label for="body">Content</label>
                      <div class="editor-bar">
                        <button class="btn"><svg><use href="#i-media"/></svg>Add Media</button>
                        <button class="btn"><svg class="teal"><use href="#i-form"/></svg>Add Form</button>
                        <button class="btn btn-map" aria-label="Insert map"><svg viewBox="0 0 20 20"><path d="M1 7l5-2 4 3 5-3 4 2v10l-5-2-4 2-4-2-5 2z"/><circle cx="12" cy="4" r="3" fill="#fff" stroke="currentColor"/><path d="M12 7v5" stroke="#fff" stroke-width="1.500"/></svg></button>
                        <button class="mode mode-on">Visual</button>
                        <button class="mode">Text</button>
                      </div>
                      <div class="editor">
                        <div class="mce">
                          <div class="mce-row">
                            <select class="mce-select boxed" aria-label="Block format"><option>Paragraph</option></select>
                            <button class="mce-btn b">B</button>
                            <button class="mce-btn i">I</button>
                            <button class="mce-btn" aria-label="Bulleted list"><svg><use href="#i-ul"/></svg></button>
                            <button class="mce-btn thin" aria-label="Numbered list"><svg viewBox="0 0 20 20"><text x="2" y="6">1</text><text x="2" y="12">2</text><text x="2" y="18">3</text><path d="M8 3h10v1H8zM8 9.500h10v1H8zM8 16h10v1H8z"/></svg></button>
                            <button class="mce-btn" aria-label="Blockquote"><svg><use href="#i-quote"/></svg></button>
                            <button class="mce-btn" aria-label="Align left"><svg><use href="#i-left"/></svg></button>
                            <button class="mce-btn" aria-label="Align center"><svg><use href="#i-center"/></svg></button>
                            <button class="mce-btn" aria-label="Align right"><svg><use href="#i-right"/></svg></button>
                            <button class="mce-btn" aria-label="Link"><svg><use href="#i-link"/></svg></button>
                            <button class="mce-btn" aria-label="Read more"><svg><use href="#i-more"/></svg></button>
                            <button class="mce-btn" aria-label="Fullscreen"><svg><use href="#i-full"/></svg></button>
                            <button class="mce-btn pressed" aria-label="Toolbar toggle"><svg><use href="#i-keys"/></svg></button>
                            <button class="mce-btn with-caret" aria-label="Shortcodes"><svg viewBox="0 0 20 20"><path d="M1 13C0 8 6 2 12 2s8 2 7 6-7 10-12 10-5.500-2-6-5z" fill="#3f6b12"/><path d="M7 13c-1-4 2-8 6-8s5 2 4 5-9 7-10 3z" fill="#b5dd4a"/><circle cx="13" cy="8.500" r="2.400" fill="#54701c"/></svg><span class="down"></span></button>
                          </div>
                          <div class="mce-row">
                            <select class="mce-select" aria-label="Formats"><option>Formats</option></select>
                            <button class="mce-btn abc">ABC</button>
                            <button class="mce-btn" aria-label="Horizontal line"><svg viewBox="0 0 20 20"><path d="M4 9h13v2H4z"/></svg></button>
                            <button class="mce-btn with-caret"><span class="fore">A</span><span class="down"></span></button>
                            <button class="mce-btn" aria-label="Paste as text"><svg><use href="#i-paste"/></svg></button>
                            <button class="mce-btn" aria-label="Clear formatting"><svg><use href="#i-eraser"/></svg></button>
                            <button class="mce-btn omega">Ω</button>
                            <button class="mce-btn" aria-label="Outdent"><svg><use href="#i-outdent"/></svg></button>
                            <button class="mce-btn" aria-label="Indent"><svg><use href="#i-indent"/></svg></button>
                            <button class="mce-btn faded" aria-label="Undo"><svg><use href="#i-undo"/></svg></button>
                            <button class="mce-btn faded" aria-label="Redo"><svg><use href="#i-redo"/></svg></button>
                            <button class="mce-btn"><span class="help">?</span></button>
                          </div>
                        </div>
                        <textarea id="body" rows="16">[gravityform id="5" title="true"]</textarea>
                      </div>
                    </div>
                  </div>
                </div>
              </section>
            </div>

            <aside class="side-col">
              <section class="postbox">
                <div class="postbox-head"><h2>Publish</h2><span class="up"></span></div>
                <div class="preview"><button class="btn">Preview Changes</button></div>
                <div class="misc"><svg><use href="#i-status"/></svg>Status: <b>Published</b> <a href="#">Edit</a></div>
                <div class="misc"><svg><use href="#i-eye"/></svg>Visibility: <b>Public</b> <a href="#">Edit</a></div>
                <div class="misc"><svg><use href="#i-history"/></svg>Revisions: <b>2</b> <a href="#">Browse</a></div>
                <div class="misc misc-last"><svg><use href="#i-calendar"/></svg>Published on: <b>Jun 10, 2025 at 11:06</b> <a href="#" class="own-line">Edit</a></div>
                <div class="duplicate"><a href="#">Duplicate This</a></div>
                <div class="lock"><input type="checkbox" id="lock"><label for="lock">Lock Modified Date</label></div>
                <div class="major">
                  <button class="btn btn-clear">Clear cache</button>
                  <div class="major-row">
                    <a href="#" class="trash">Move to Trash</a>
                    <button class="btn-primary">Update</button>
                  </div>
                </div>
              </section>

              <section class="postbox">
                <div class="postbox-head"><h2>Page Attributes</h2><span class="up"></span></div>
                <div class="attributes">
                  <label for="parent">Parent</label>
                  <select id="parent" class="wide"><option>(no parent)</option></select>
                  <label for="template">Template</label>
                  <select id="template"><option>Default template</option></select>
                  <label for="order">Order</label>
                  <input type="text" id="order" value="0">
                  <p>Need help? Use the Help tab above the screen title.</p>
                </div>
              </section>

              <section class="postbox">
                <div class="postbox-head"><h2>WP Rocket Options</h2><span class="up"></span></div>
                <div class="rocket"><input type="checkbox" id="nocache"><label for="nocache">Never cache this page</label></div>
              </section>
            </aside>
          </div>
        </main>
      </div>
    </div>
    <div class="scrollbar"><div class="thumb"></div></div>
  </div>

  <div class="context-menu" role="menu">
    <button class="hover">Open Link in New Tab</button>
    <button>Open Link in New Window</button>
    <button>Open Link in Incognito Window</button>
    <button>Open Link as<svg class="more"><use href="#i-chevron"/></svg></button>
    <hr>
    <button>Save Link As...</button>
    <button>Copy Link Address</button>
    <hr>
    <button>Copy</button>
    <button class="off">Copy Link to Highlight</button>
    <button>Print...</button>
    <button>Translate Selection to English</button>
    <hr>
    <button><svg class="item-icon" viewBox="0 0 16 16"><circle cx="8" cy="8" r="5" fill="#eef4fc" stroke="#4c8be0" stroke-width="1.400"/><path d="M7.200 5.500h1.600v5H7.200z" fill="#333"/></svg>1Password – Password Manager<svg class="more"><use href="#i-chevron"/></svg></button>
    <button><svg class="item-icon clockify" viewBox="0 0 16 16"><rect width="16" height="16" rx="2" fill="#12b3ea"/><use href="#i-clock" x="3" y="3" width="10" height="10"/></svg>Start timer with description 'https://design1.cannaplanners.com/test/'</button>
    <hr>
    <button>Inspect</button>
    <hr>
    <button>Speech<svg class="more"><use href="#i-chevron"/></svg></button>
    <hr>
    <button>Services<svg class="more"><use href="#i-chevron"/></svg></button>
  </div>
  <svg class="cursor" viewBox="0 0 12 18"><path d="M1 1v13l3-3 2.500 6 2.500-1-2.500-5.500H11z" fill="#000" stroke="#fff"/></svg>

  <div class="recorder">
    <button class="camera" aria-label="Camera"><svg viewBox="0 0 22 18"><path d="M2 2h13v14H2zM15 7l5-3v10l-5-3" fill="none" stroke="#fff" stroke-width="2" stroke-linejoin="round"/></svg></button>
    <div class="controls">
      <button class="stop" aria-label="Stop"><span></span></button>
      <button aria-label="Pause"><svg viewBox="0 0 20 20"><rect x="2" y="1" width="6" height="18" rx="2"/><rect x="12" y="1" width="6" height="18" rx="2"/></svg></button>
      <button aria-label="Rewind"><svg viewBox="0 0 20 20"><path d="M10 4v12L0 10zM20 4v12l-10-6z"/></svg></button>
      <span class="time">3:04</span>
      <span class="divider"></span>
      <button aria-label="Restart"><svg viewBox="0 0 20 20"><path d="M4 5.500a7.500 7.500 0 1 1-1.500 5" fill="none" stroke="#fff" stroke-width="1.600"/><path d="M3 2v5h5" fill="none" stroke="#fff" stroke-width="1.600"/></svg></button>
      <button aria-label="Delete"><svg viewBox="0 0 20 20"><path d="M2 5h16M7 5V1.500h6V5M4 5v14h12V5M8 8.500v7M12 8.500v7" fill="none" stroke="#fff" stroke-width="2"/></svg></button>
    </div>
  </div>
  <div class="status-bubble">https://design1.cannaplanners.com/test/</div>
</body>
</html>
```
FILE: styles.css
```css
* {
  box-sizing: border-box;
}
body {
  margin: 0;
  height: 100vh;
  overflow: hidden;
  display: flex;
  flex-direction: column;
  font-family: Inter, "Liberation Sans", sans-serif;
  font-size: 13px;
  color: #50575e;
  background: #fff;
}
button, input, select, textarea {
  font: inherit;
  color: inherit;
  margin: 0;
}
button {
  background: none;
  border: 0;
  padding: 0;
}
h2, h3, p {
  margin: 0;
}
a {
  color: #3a7ab8;
}
svg {
  fill: currentColor;
  flex: none;
}
.sprite {
  display: none;
}

/* browser tabs */
.tabstrip {
  display: flex;
  align-items: center;
  height: 41px;
  flex: none;
  padding-left: 12px;
  background: #d6e2fc;
}
.light {
  width: 13px;
  height: 13px;
  border-radius: 50%;
  margin-right: 7px;
}
.light-red {
  background: #f35158;
}
.light-gray {
  background: #cbd4e1;
}
.light-green {
  background: #34d94a;
}
.rec-dot {
  width: 16px;
  height: 16px;
  margin: 0 15px 0 18px;
}
.tab {
  display: flex;
  align-items: center;
  gap: 8px;
  width: 238px;
  height: 34px;
  padding: 0 11px;
  color: #474b55;
  position: relative;
}
.tab::before {
  content: "";
  position: absolute;
  left: 0;
  top: 10px;
  width: 1px;
  height: 15px;
  background: #b3c3e6;
}
.favicon {
  width: 16px;
  height: 16px;
}
.cal-day {
  font-size: 8px;
  fill: #1a73e8;
}
.tab-title {
  flex: 1;
  overflow: hidden;
  white-space: nowrap;
  font-size: 12px;
  mask-image: linear-gradient(to right, #000 85%, transparent 97%);
}
.tab-close {
  width: 16px;
  height: 16px;
  color: #33363b;
}
.tab-close svg {
  width: 16px;
  height: 16px;
  display: block;
}
.tab-active {
  align-self: flex-end;
  background: #fff;
  border-radius: 10px 10px 0 0;
  padding-bottom: 7px;
}
.tab-active::before {
  display: none;
}
.new-tab {
  width: 16px;
  height: 16px;
  margin-left: 9px;
}
.mic-dot {
  width: 6px;
  height: 6px;
  border-radius: 50%;
  background: #f39b2d;
  margin: 0 5px 25px auto;
}

/* address row */
.toolbar {
  display: flex;
  align-items: center;
  height: 46px;
  flex: none;
  padding: 0 8px 0 4px;
}
.tool {
  width: 36px;
  height: 32px;
  display: flex;
  align-items: center;
  justify-content: center;
}
.tool svg {
  width: 19px;
  height: 19px;
}
.tool-cyan {
  color: #1fb1e8;
}
.omnibox {
  flex: 1;
  display: flex;
  align-items: center;
  height: 34px;
  margin: 0 9px 0 10px;
  padding: 0 6px 0 3px;
  border-radius: 17px;
  background: #edf1fa;
}
.site-info {
  width: 26px;
  height: 26px;
  border-radius: 50%;
  background: #fff;
  display: flex;
  align-items: center;
  justify-content: center;
}
.site-info svg {
  width: 14px;
  height: 14px;
}
.url {
  flex: 1;
  border: 0;
  background: none;
  padding: 0 6px;
  font-size: 14px;
  color: #36393e;
}
.extensions {
  display: flex;
  align-items: center;
}
.ring {
  width: 15px;
  height: 15px;
  border-radius: 50%;
  background: radial-gradient(#fff 40%, transparent 44%), conic-gradient(#46d7e8, #5a7df0, #c94be8, #f0568a, #f5c542, #52e07a, #46d7e8);
}
.vsep {
  width: 2px;
  height: 15px;
  background: #dde5f5;
  margin: 0 8px;
}
.profile {
  width: 20px;
  height: 20px;
  border-radius: 50%;
  background: #e23c22;
  color: #fff;
  font-size: 11px;
  line-height: 20px;
}
.finish {
  display: flex;
  align-items: center;
  gap: 11px;
  height: 34px;
  padding: 0 12px 0 10px;
  margin-left: 4px;
  border-radius: 17px;
  background: #d3e0fb;
  color: #1d2b4a;
  font-size: 13px;
  font-weight: 500;
}
.finish svg {
  width: 4px;
  height: 14px;
}
.bookmarks {
  display: flex;
  align-items: center;
  height: 35px;
  flex: none;
  padding: 0 15px 0 19px;
  border-bottom: 1px solid #8b8d90;
}
.bookmarks .apps {
  width: 14px;
  height: 14px;
  margin-right: 8px;
}
.bookmarks a {
  display: flex;
  align-items: center;
  gap: 7px;
  margin: 0 14px 0 6px;
  color: #4b4f54;
  text-decoration: none;
  font-size: 12px;
}
.bookmarks a:last-child {
  margin-right: 0;
}
.bookmarks a svg {
  width: 17px;
  height: 16px;
}
.bookmarks .push {
  margin-left: auto;
}

/* page area */
.viewport {
  flex: 1;
  min-height: 0;
  display: flex;
}
.wp {
  flex: 1;
  min-width: 0;
  display: flex;
  flex-direction: column;
}
.scrollbar {
  width: 15px;
  padding: 125px 3px 0 4px;
  background: #fafafa;
  border-left: 1px solid #ececec;
}
.thumb {
  height: 275px;
  border-radius: 4px;
  background: #c1c1c1;
}
.adminbar {
  display: flex;
  align-items: center;
  gap: 15px;
  height: 32px;
  flex: none;
  padding: 0 8px;
  background: #1d2327;
}
.adminbar a {
  display: flex;
  align-items: center;
  gap: 6px;
  color: #f0f0f1;
  text-decoration: none;
}
.adminbar a svg {
  width: 19px;
  height: 19px;
  color: #a0a5aa;
}
.adminbar .dim {
  gap: 9px;
  color: #8c9095;
}
.adminbar .howdy {
  margin-left: auto;
}
.adminbar a .avatar {
  width: 16px;
  height: 16px;
}
.wp-body {
  flex: 1;
  min-height: 0;
  display: flex;
  overflow: hidden;
}
.menu {
  width: 160px;
  flex: none;
  padding-top: 12px;
  background: #1d2327;
}
.menu > a {
  display: flex;
  align-items: center;
  height: 34px;
  padding-left: 8px;
  color: #f0f0f1;
  font-size: 14px;
  text-decoration: none;
  white-space: nowrap;
  position: relative;
}
.menu > a svg {
  width: 20px;
  height: 20px;
  margin-right: 7px;
  color: #a0a5aa;
}
.menu > .gap {
  margin-top: 12px;
}
.menu > .current {
  background: #2675b3;
}
.menu > .current svg {
  color: #fff;
}
.menu > .current::after {
  content: "";
  position: absolute;
  right: 0;
  top: 9px;
  border: 8px solid transparent;
  border-right-color: #f0f0f1;
  border-left: 0;
}
.menu > a .bird {
  width: 24px;
  height: 26px;
  margin-right: 3px;
}
.count {
  min-width: 18px;
  height: 18px;
  padding: 0 5px;
  margin-left: 5px;
  border-radius: 9px;
  background: #cf2139;
  color: #fff;
  font-size: 11px;
  line-height: 18px;
  text-align: center;
}
.count.tight {
  margin-left: 2px;
}
.submenu {
  padding: 7px 0 6px;
  background: #2c3338;
}
.submenu a {
  display: block;
  padding-left: 12px;
  line-height: 28px;
  color: #a9adb2;
  text-decoration: none;
}
.submenu .on {
  color: #fff;
  font-weight: 600;
}
.content {
  flex: 1;
  min-width: 0;
  padding: 0 20px 0 22px;
  background: #f0f0f1;
}
.notice {
  border: 1px solid #c9cacd;
  border-left: 4px solid #dba617;
  background: #fff;
}
.notice-warning {
  height: 12px;
  border-top: 0;
}
.notice-success {
  display: flex;
  align-items: center;
  justify-content: space-between;
  height: 40px;
  margin-top: 16px;
  padding: 0 13px 0 14px;
  border-left-color: #1eb53a;
}
.dismiss svg {
  width: 15px;
  height: 15px;
  display: block;
}
.columns {
  display: grid;
  grid-template-columns: minmax(0, 1fr) 279px;
  gap: 21px;
  margin-top: 25px;
}
.title-input {
  display: block;
  width: 100%;
  height: 38px;
  padding: 1px 8px 0;
  border: 1px solid #8c8f94;
  border-radius: 4px;
  background: #fff;
  color: #32373c;
  font-size: 20px;
}
.permalink {
  display: flex;
  align-items: center;
  gap: 4px;
  height: 24px;
  margin: 8px 0 22px;
  padding-left: 10px;
}
.permalink strong {
  font-weight: 600;
  color: #646970;
}
.permalink a {
  background: #98c7f3;
  color: #1d5a8c;
  box-shadow: 0 0 0 2px #7fb2e3;
}
.btn {
  display: flex;
  align-items: center;
  justify-content: center;
  height: 30px;
  padding: 0 10px;
  border: 1px solid #3b7fba;
  border-radius: 3px;
  background: #f6f7f7;
  color: #3273ad;
}
.btn-small {
  height: 24px;
  padding: 0 6px;
  font-size: 11px;
}
.postbox {
  border: 1px solid #c9cacd;
  background: #fff;
}
.postbox-head {
  display: flex;
  align-items: center;
  justify-content: space-between;
  height: 38px;
  padding: 0 12px;
  border-bottom: 1px solid #c9cacd;
}
.postbox-head h2 {
  font-size: 14px;
  font-weight: 600;
  color: #1d2327;
}
.up {
  border: 4px solid transparent;
  border-bottom: 6px solid #787c82;
  border-top: 0;
}
.up.small {
  border-width: 0 3px 4px;
}
.builder {
  border-bottom: 0;
}
.builder-body {
  padding: 14px 12px 0;
}
.builder-body h3 {
  margin-bottom: 9px;
  font-size: 13px;
  line-height: 20px;
  font-weight: 600;
  color: #444a50;
}
.module {
  border: 1px solid #d0d1d4;
}
.module-head {
  display: flex;
  align-items: center;
  gap: 5px;
  height: 37px;
  padding: 0 8px 0 10px;
  border-bottom: 1px solid #d0d1d4;
}
.module-head strong {
  flex: 1;
  margin-left: 2px;
  font-size: 14px;
  font-weight: 600;
  color: #444a50;
}
.order {
  width: 20px;
  height: 20px;
  border-radius: 50%;
  background: #f1f1f2;
  line-height: 20px;
  text-align: center;
  font-weight: 500;
}
.round {
  width: 20px;
  height: 20px;
  border: 1px solid #c3c4c7;
  border-radius: 50%;
  display: flex;
  align-items: center;
  justify-content: center;
  color: #50575e;
}
.round svg {
  width: 13px;
  height: 13px;
}
.field {
  margin: 0 3px;
  padding: 15px 9px 14px;
  border-bottom: 1px solid #eeeeef;
}
.field label {
  display: block;
  margin-bottom: 9px;
  line-height: 20px;
  font-weight: 600;
  color: #444a50;
}
.field input {
  display: block;
  width: 100%;
  height: 30px;
  padding: 0 9px;
  border: 1px solid #8c8f94;
  border-radius: 4px;
  font-size: 14px;
}
.editor-bar {
  display: flex;
  gap: 8px;
  height: 34px;
}
.editor-bar .btn svg {
  width: 18px;
  height: 18px;
  margin-right: 6px;
  color: #1f6ca5;
}
.editor-bar .btn {
  padding: 0 7px;
}
.editor-bar .btn .teal {
  width: 16px;
  height: 16px;
  margin-right: 4px;
  color: #0e7490;
}
.editor-bar .btn-map {
  width: 105px;
  justify-content: flex-start;
}
.mode {
  align-self: flex-end;
  height: 28px;
  padding: 0 8px;
  border: 1px solid #dcdcde;
  border-bottom: 0;
  background: #ebebed;
  color: #646970;
  font-size: 13px;
}
.mode + .mode {
  margin-left: -3px;
}
.mode.mode-on {
  margin-left: auto;
  background: #f6f7f7;
}
.editor {
  border: 1px solid #d6d7d9;
}
.mce {
  padding: 3px 5px;
  background: #f6f6f7;
  border-bottom: 1px solid #d6d7d9;
}
.mce-row {
  display: flex;
  align-items: center;
  height: 34px;
}
.mce-select {
  appearance: none;
  width: 78px;
  height: 26px;
  padding: 0 7px;
  margin-right: 2px;
  border: 0;
  font-size: 13px;
  background: url("data:image/svg+xml,%3Csvg xmlns='http://www.w3.org/2000/svg' viewBox='0 0 8 7'%3E%3Cpath d='M0 0h8L4 7z' fill='%2350575e'/%3E%3C/svg%3E") no-repeat right 5px center / 8px 7px;
}
.mce-select.boxed {
  width: 114px;
  margin-right: 1px;
  padding: 0 8px;
  border: 1px solid #e4e4e6;
  font-size: 13px;
  background-color: #fff;
  background-position: right 6px center;
}
.mce-btn {
  width: 28px;
  height: 26px;
  margin: 0 2px;
  display: flex;
  align-items: center;
  justify-content: center;
  color: #50575e;
}
.mce-btn svg {
  width: 18px;
  height: 18px;
}
.mce-btn.b {
  font-size: 18px;
  font-weight: 800;
}
.mce-btn.i {
  font-family: "Liberation Serif", serif;
  font-size: 20px;
  font-style: italic;
  font-weight: 700;
}
.thin {
  color: #8c9095;
}
.thin text {
  font-size: 6px;
}
.pressed {
  border: 1px solid #50575e;
  background: #ebebec;
}
.with-caret {
  width: 48px;
  gap: 9px;
}
.down {
  border: 4px solid transparent;
  border-top: 7px solid #50575e;
  border-bottom: 0;
}
.abc {
  font-size: 8px;
  text-decoration: line-through;
}
.fore {
  width: 20px;
  line-height: 18px;
  border-bottom: 3px solid #50575e;
  font-size: 16px;
}
.omega {
  font-size: 18px;
  font-weight: 500;
}
.faded {
  color: #b9bbbe;
}
.help {
  width: 15px;
  height: 15px;
  border-radius: 50%;
  background: #444a50;
  color: #fff;
  font-size: 11px;
  line-height: 15px;
  font-weight: 700;
}
textarea {
  display: block;
  width: 100%;
  padding: 16px 10px;
  border: 0;
  resize: none;
  font-family: "Liberation Serif", serif;
  font-size: 17px;
  line-height: 24px;
  color: #444;
}

/* right column */
.side-col {
  display: flex;
  flex-direction: column;
  gap: 21px;
}
.preview {
  display: flex;
  justify-content: flex-end;
  padding: 10px 10px 5px;
}
.misc {
  padding: 7px 9px;
  line-height: 20px;
}
.misc svg {
  width: 18px;
  height: 18px;
  margin-right: 8px;
  vertical-align: -4px;
  color: #8c8f94;
}
.misc b {
  font-weight: 600;
  color: #3c434a;
}
.misc-last {
  padding-bottom: 6px;
  border-bottom: 1px solid #dcdcde;
}
.misc .own-line {
  display: block;
}
.duplicate {
  padding: 9px 9px;
  line-height: 20px;
  background: #f6f7f7;
}
.lock {
  display: flex;
  align-items: center;
  gap: 8px;
  height: 43px;
  padding: 0 9px 13px;
}
.lock input {
  appearance: none;
  width: 32px;
  height: 16px;
  border: 1px solid #a7aaad;
  border-radius: 8px;
  background: radial-gradient(circle at 7px 7px, #1e1e1e 6px, transparent 7px);
}
.major {
  padding: 10px 10px 9px 9px;
  border-top: 1px solid #dcdcde;
  background: #f6f7f7;
}
.btn-clear {
  background: #fff;
}
.major-row {
  display: flex;
  align-items: center;
  justify-content: space-between;
}
.trash {
  color: #b8294a;
}
.btn-primary {
  width: 71px;
  height: 32px;
  border-radius: 3px;
  background: #2571ad;
  color: #fff;
}
.attributes {
  padding: 13px 12px;
}
.attributes label {
  display: block;
  line-height: 20px;
  margin-bottom: 5px;
  font-weight: 600;
}
.attributes select, .attributes input {
  appearance: none;
  display: block;
  width: 173px;
  height: 30px;
  margin-bottom: 14px;
  padding: 0 9px;
  border: 1px solid #a7aaad;
  border-radius: 3px;
  font-size: 14px;
  background: #fff;
}
.attributes select {
  background: #fff url("data:image/svg+xml,%3Csvg xmlns='http://www.w3.org/2000/svg' viewBox='0 0 12 8'%3E%3Cpath d='M1 1l5 5 5-5' fill='none' stroke='%2350575e' stroke-width='2'/%3E%3C/svg%3E") no-repeat right 8px center / 11px 8px;
}
.attributes .wide {
  width: 187px;
}
.attributes input {
  width: 55px;
}
.attributes p {
  line-height: 19px;
}
.rocket {
  display: flex;
  align-items: center;
  gap: 4px;
  height: 44px;
  padding-left: 21px;
}
.rocket input {
  appearance: none;
  width: 17px;
  height: 17px;
  border: 1px solid #a7aaad;
  border-radius: 4px;
}

/* overlays */
.context-menu {
  position: absolute;
  left: 450px;
  top: 304px;
  width: 499px;
  padding: 5px 4px;
  border: 1px solid #c9c9c8;
  border-width: 0 1px;
  border-radius: 7px;
  background: #e4e4e2;
  box-shadow: 0 0 1px #888, 0 6px 16px rgba(0,0,0,0.25);
}
.context-menu button {
  display: flex;
  align-items: center;
  width: 100%;
  height: 22px;
  padding: 0 8px 0 9px;
  border-radius: 4px;
  color: #2c2c2c;
}
.context-menu .hover {
  background: #4f9ff9;
  color: #fff;
}
.context-menu .off {
  color: #b3b3b1;
}
.context-menu hr {
  height: 1px;
  margin: 5px 9px;
  border: 0;
  background: #d0d0ce;
}
.context-menu .more {
  width: 10px;
  height: 12px;
  margin-left: auto;
}
.item-icon {
  width: 16px;
  height: 16px;
  margin-right: 6px;
}
.clockify {
  color: #fff;
}
.cursor {
  position: absolute;
  left: 486px;
  top: 320px;
  width: 12px;
  height: 18px;
}
.recorder {
  position: absolute;
  left: 27px;
  bottom: 15px;
  display: flex;
  gap: 14px;
}
.camera, .controls {
  height: 54px;
  background: #25272a;
  box-shadow: 0 0 0 2px rgba(130,130,135,0.5);
}
.camera {
  width: 50px;
  border-radius: 12px;
}
.camera svg {
  width: 22px;
  height: 18px;
}
.controls {
  display: flex;
  align-items: center;
  padding: 0 23px 0 17px;
  border-radius: 16px;
  color: #fff;
}
.controls button svg {
  width: 20px;
  height: 20px;
  display: block;
}
.controls button {
  margin-right: 17px;
}
.controls button:last-child {
  margin-right: 0;
}
.controls .stop {
  width: 36px;
  height: 36px;
  margin-right: 10px;
  padding: 9px;
  border-radius: 14px;
  background: #f4523f;
}
.stop span {
  display: block;
  height: 18px;
  border-radius: 4px;
  background: #fff;
}
.time {
  font-size: 14px;
  font-weight: 600;
}
.divider {
  width: 1px;
  height: 32px;
  margin: 0 11px 0 15px;
  background: #35373b;
}
.controls .divider + button {
  margin-right: 12px;
}
.status-bubble {
  position: absolute;
  left: 0;
  bottom: 0;
  height: 20px;
  padding: 0 7px 0 5px;
  border-radius: 0 4px 0 0;
  background: #d3e0f9;
  color: #4b5563;
  font-size: 12px;
  line-height: 20px;
}
```
